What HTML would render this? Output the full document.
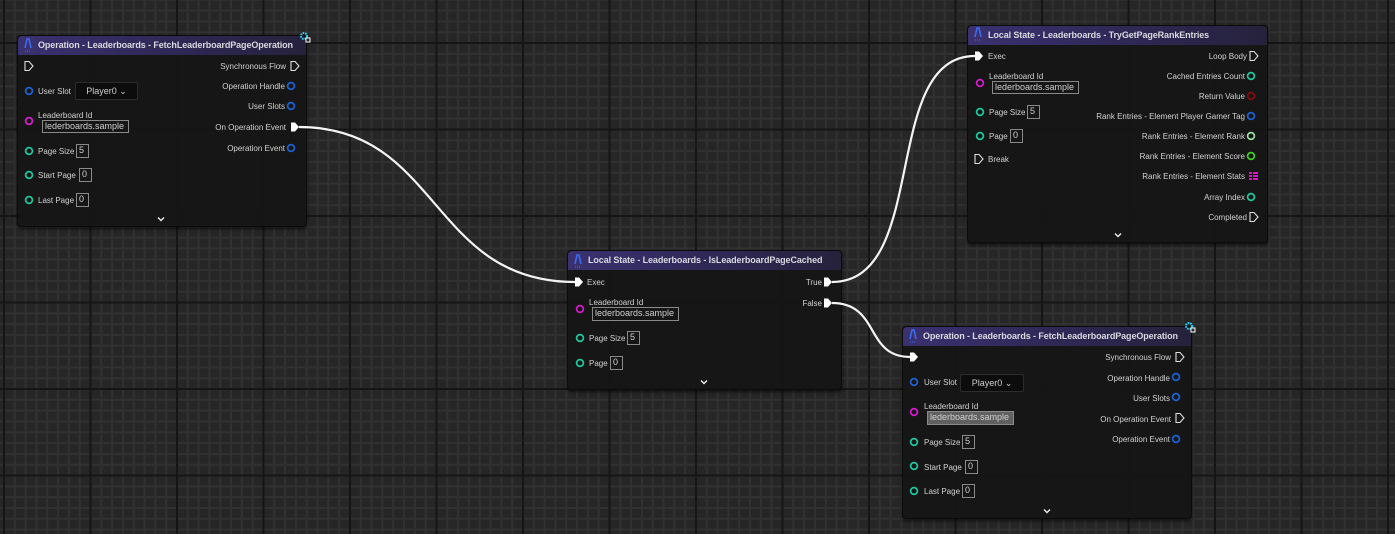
<!DOCTYPE html>
<html><head><meta charset="utf-8"><style>
*{margin:0;padding:0;box-sizing:border-box}
body{width:1395px;height:534px;overflow:hidden;position:relative;font-family:"Liberation Sans",sans-serif;
background-color:#262626;
background-image:
linear-gradient(90deg,#151515 0,#151515 2px,transparent 2px),
linear-gradient(0deg,#151515 0,#151515 2px,transparent 2px),
linear-gradient(90deg,#313131 0,#313131 2px,transparent 2px),
linear-gradient(0deg,#313131 0,#313131 2px,transparent 2px);
background-size:86.5px 86.5px,86.5px 86.5px,10.8125px 10.8125px,10.8125px 10.8125px;
background-position:3px 0,0 44px,3px 0,0 44px;}
.n{position:absolute;background:rgba(20,21,20,.95);border-radius:4px;box-shadow:0 2px 3px rgba(0,0,0,.6);border:1px solid #0b0b0b}
.h{position:absolute;left:0;right:0;top:0;height:19px;border-radius:4px 4px 0 0;background:linear-gradient(90deg,#3a3170,#2d2752 60%,#26223c);}
.ht{position:absolute;left:20px;top:4px;font-size:9px;font-weight:bold;color:#d8d8de;white-space:nowrap;letter-spacing:-.1px}
.t{position:absolute;font-size:8px;line-height:10px;color:#d2d2d2;white-space:nowrap;margin-top:-4px}
.r{text-align:right}
.b{position:absolute;border:1px solid #8a8a8a;font-size:9px;color:#cfcfcf;line-height:11px;padding-left:2px;white-space:nowrap}
.dd{position:absolute;background:#0c0c0c;border:1px solid #2c2c2c;border-radius:2px;font-size:9px;color:#cfcfcf;line-height:16px;text-align:center}
svg{position:absolute;left:0;top:0}
</style></head><body>

<div class="n" style="left:17px;top:35px;width:290px;height:192px"><div class="h"></div><div class="ht">Operation - Leaderboards - FetchLeaderboardPageOperation</div></div>
<div class="n" style="left:967px;top:25px;width:301px;height:218px"><div class="h"></div><div class="ht">Local State - Leaderboards - TryGetPageRankEntries</div></div>
<div class="n" style="left:567px;top:250px;width:275px;height:140px"><div class="h"></div><div class="ht">Local State - Leaderboards - IsLeaderboardPageCached</div></div>
<div class="n" style="left:902px;top:326px;width:290px;height:193px"><div class="h"></div><div class="ht">Operation - Leaderboards - FetchLeaderboardPageOperation</div></div>

<!-- node1 -->
<div class="t" style="left:38px;top:91px">User Slot</div>
<div class="dd" style="left:75px;top:82px;width:63px;height:18px">Player0 ⌄</div>
<div class="t" style="left:38px;top:115px">Leaderboard Id</div>
<div class="b" style="left:42px;top:120px;width:87px;height:13px">lederboards.sample</div>
<div class="t" style="left:38px;top:151px">Page Size</div><div class="b" style="left:76px;top:144px;width:13px;height:14px">5</div>
<div class="t" style="left:38px;top:175px">Start Page</div><div class="b" style="left:79px;top:168px;width:13px;height:14px">0</div>
<div class="t" style="left:38px;top:200px">Last Page</div><div class="b" style="left:76px;top:193px;width:13px;height:14px">0</div>
<div class="t r" style="right:1109px;top:66px">Synchronous Flow</div>
<div class="t r" style="right:1110px;top:86px">Operation Handle</div>
<div class="t r" style="right:1110px;top:106px">User Slots</div>
<div class="t r" style="right:1109px;top:127px">On Operation Event</div>
<div class="t r" style="right:1110px;top:148px">Operation Event</div>

<!-- node4 -->
<div class="t" style="left:924px;top:382px">User Slot</div>
<div class="dd" style="left:960px;top:374px;width:64px;height:18px">Player0 ⌄</div>
<div class="t" style="left:924px;top:406px">Leaderboard Id</div>
<div class="b" style="left:927px;top:411px;width:87px;height:14px;background:#606060;border-color:#8a8a8a">lederboards.sample</div>
<div class="t" style="left:924px;top:442px">Page Size</div><div class="b" style="left:962px;top:435px;width:13px;height:14px">5</div>
<div class="t" style="left:924px;top:467px">Start Page</div><div class="b" style="left:965px;top:460px;width:13px;height:14px">0</div>
<div class="t" style="left:924px;top:491px">Last Page</div><div class="b" style="left:962px;top:484px;width:13px;height:14px">0</div>
<div class="t r" style="right:224px;top:357px">Synchronous Flow</div>
<div class="t r" style="right:225px;top:378px">Operation Handle</div>
<div class="t r" style="right:225px;top:398px">User Slots</div>
<div class="t r" style="right:224px;top:419px">On Operation Event</div>
<div class="t r" style="right:225px;top:439px">Operation Event</div>

<!-- node2 -->
<div class="t" style="left:988px;top:56px">Exec</div>
<div class="t" style="left:989px;top:76px">Leaderboard Id</div>
<div class="b" style="left:992px;top:81px;width:87px;height:13px">lederboards.sample</div>
<div class="t" style="left:989px;top:112px">Page Size</div><div class="b" style="left:1027px;top:105px;width:13px;height:14px">5</div>
<div class="t" style="left:989px;top:136px">Page</div><div class="b" style="left:1010px;top:129px;width:13px;height:14px">0</div>
<div class="t" style="left:988px;top:159px">Break</div>
<div class="t r" style="right:148px;top:56px">Loop Body</div>
<div class="t r" style="right:150px;top:76px">Cached Entries Count</div>
<div class="t r" style="right:150px;top:96px">Return Value</div>
<div class="t r" style="right:150px;top:116px">Rank Entries - Element Player Gamer Tag</div>
<div class="t r" style="right:150px;top:136px">Rank Entries - Element Rank</div>
<div class="t r" style="right:150px;top:156px">Rank Entries - Element Score</div>
<div class="t r" style="right:150px;top:176px">Rank Entries - Element Stats</div>
<div class="t r" style="right:150px;top:197px">Array Index</div>
<div class="t r" style="right:148px;top:217px">Completed</div>

<!-- node3 -->
<div class="t" style="left:587px;top:282px">Exec</div>
<div class="t" style="left:589px;top:302px">Leaderboard Id</div>
<div class="b" style="left:592px;top:307px;width:87px;height:14px">lederboards.sample</div>
<div class="t" style="left:589px;top:338px">Page Size</div><div class="b" style="left:627px;top:331px;width:13px;height:14px">5</div>
<div class="t" style="left:589px;top:363px">Page</div><div class="b" style="left:610px;top:356px;width:13px;height:14px">0</div>
<div class="t r" style="right:573px;top:282px">True</div>
<div class="t r" style="right:573px;top:303px">False</div>

<svg width="1395" height="534" viewBox="0 0 1395 534">
<defs>
<g id="eo"><path d="M-4 -4.5h4l4 4.5-4 4.5h-4z" fill="none" stroke="#e0e0e0" stroke-width="1.1"/></g>
<g id="ef"><path d="M-4 -4.5h4l4 4.5-4 4.5h-4z" fill="#fff"/></g>
<g id="lg"><path d="M-3 5 L-1 -4 H1 L3 5" fill="none" stroke="#3b6cf0" stroke-width="1.6"/><path d="M-3 8h6" stroke="#3b6cf0" stroke-dasharray="1 1"/></g>
<g id="ch"><path d="M-3 -1.5 L0 1.5 L3 -1.5" fill="none" stroke="#eee" stroke-width="1.4"/></g>
<g id="gr"><circle r="3" fill="none" stroke="#27d8ff" stroke-width="2" stroke-dasharray="1.5 1"/><path d="M2 2h4v4h-4z" fill="none" stroke="#fff"/></g>
</defs>
<g fill="none" stroke="#f4f4f4" stroke-width="2.2">
<path d="M299 127 C440 127 430 282 575 282"/>
<path d="M832 282 C930 282 880 56 975 56"/>
<path d="M832 303 C880 303 865 357 910 357"/>
</g>
<use href="#lg" x="28" y="43"/><use href="#lg" x="978" y="32"/><use href="#lg" x="578" y="259"/><use href="#lg" x="913" y="334"/>
<use href="#gr" x="304" y="36"/><use href="#gr" x="1189" y="326"/>
<use href="#ch" x="161" y="219"/><use href="#ch" x="1118" y="235"/><use href="#ch" x="704" y="382"/><use href="#ch" x="1047" y="511"/>
<use href="#eo" x="29" y="66"/><use href="#eo" x="295" y="66"/><use href="#ef" x="295" y="127"/>
<use href="#ef" x="914" y="357"/><use href="#eo" x="1180" y="357"/><use href="#eo" x="1180" y="418"/>
<use href="#ef" x="979" y="56"/><use href="#eo" x="979" y="159"/><use href="#eo" x="1254" y="56"/><use href="#eo" x="1254" y="217"/>
<use href="#ef" x="579" y="282"/><use href="#ef" x="828" y="282"/><use href="#ef" x="828" y="303"/>
<g fill="none" stroke-width="1.7">
<g stroke="#1d63d8"><circle cx="29" cy="91" r="3.4"/><circle cx="291" cy="86" r="3.4"/><circle cx="291" cy="106" r="3.4"/><circle cx="291" cy="148" r="3.4"/>
<circle cx="914" cy="382" r="3.4"/><circle cx="1176" cy="377" r="3.4"/><circle cx="1176" cy="397" r="3.4"/><circle cx="1176" cy="439" r="3.4"/><circle cx="1251" cy="116" r="3.4"/></g>
<g stroke="#d81ad0"><circle cx="29" cy="121" r="3.4"/><circle cx="980" cy="83" r="3.4"/><circle cx="580" cy="309" r="3.4"/><circle cx="914" cy="412" r="3.4"/></g>
<g stroke="#1ec8a0"><circle cx="29" cy="151" r="3.4"/><circle cx="29" cy="175" r="3.4"/><circle cx="29" cy="200" r="3.4"/>
<circle cx="914" cy="442" r="3.4"/><circle cx="914" cy="466" r="3.4"/><circle cx="914" cy="491" r="3.4"/>
<circle cx="980" cy="112" r="3.4"/><circle cx="980" cy="136" r="3.4"/><circle cx="580" cy="338" r="3.4"/><circle cx="580" cy="363" r="3.4"/>
<circle cx="1251" cy="76" r="3.4"/><circle cx="1251" cy="197" r="3.4"/></g>
<circle cx="1251" cy="96" r="3.4" stroke="#8a0a0a"/>
<circle cx="1251" cy="136" r="3.4" stroke="#9be0a0"/>
<circle cx="1251" cy="156" r="3.4" stroke="#3fd01c"/>
</g>
<g fill="#e010c8"><rect x="1249" y="172" width="3" height="2"/><rect x="1253" y="172" width="5" height="2"/><rect x="1249" y="175" width="3" height="2"/><rect x="1253" y="175" width="5" height="2"/><rect x="1249" y="178" width="3" height="2"/><rect x="1253" y="178" width="5" height="2"/></g>
</svg>
</body></html>
